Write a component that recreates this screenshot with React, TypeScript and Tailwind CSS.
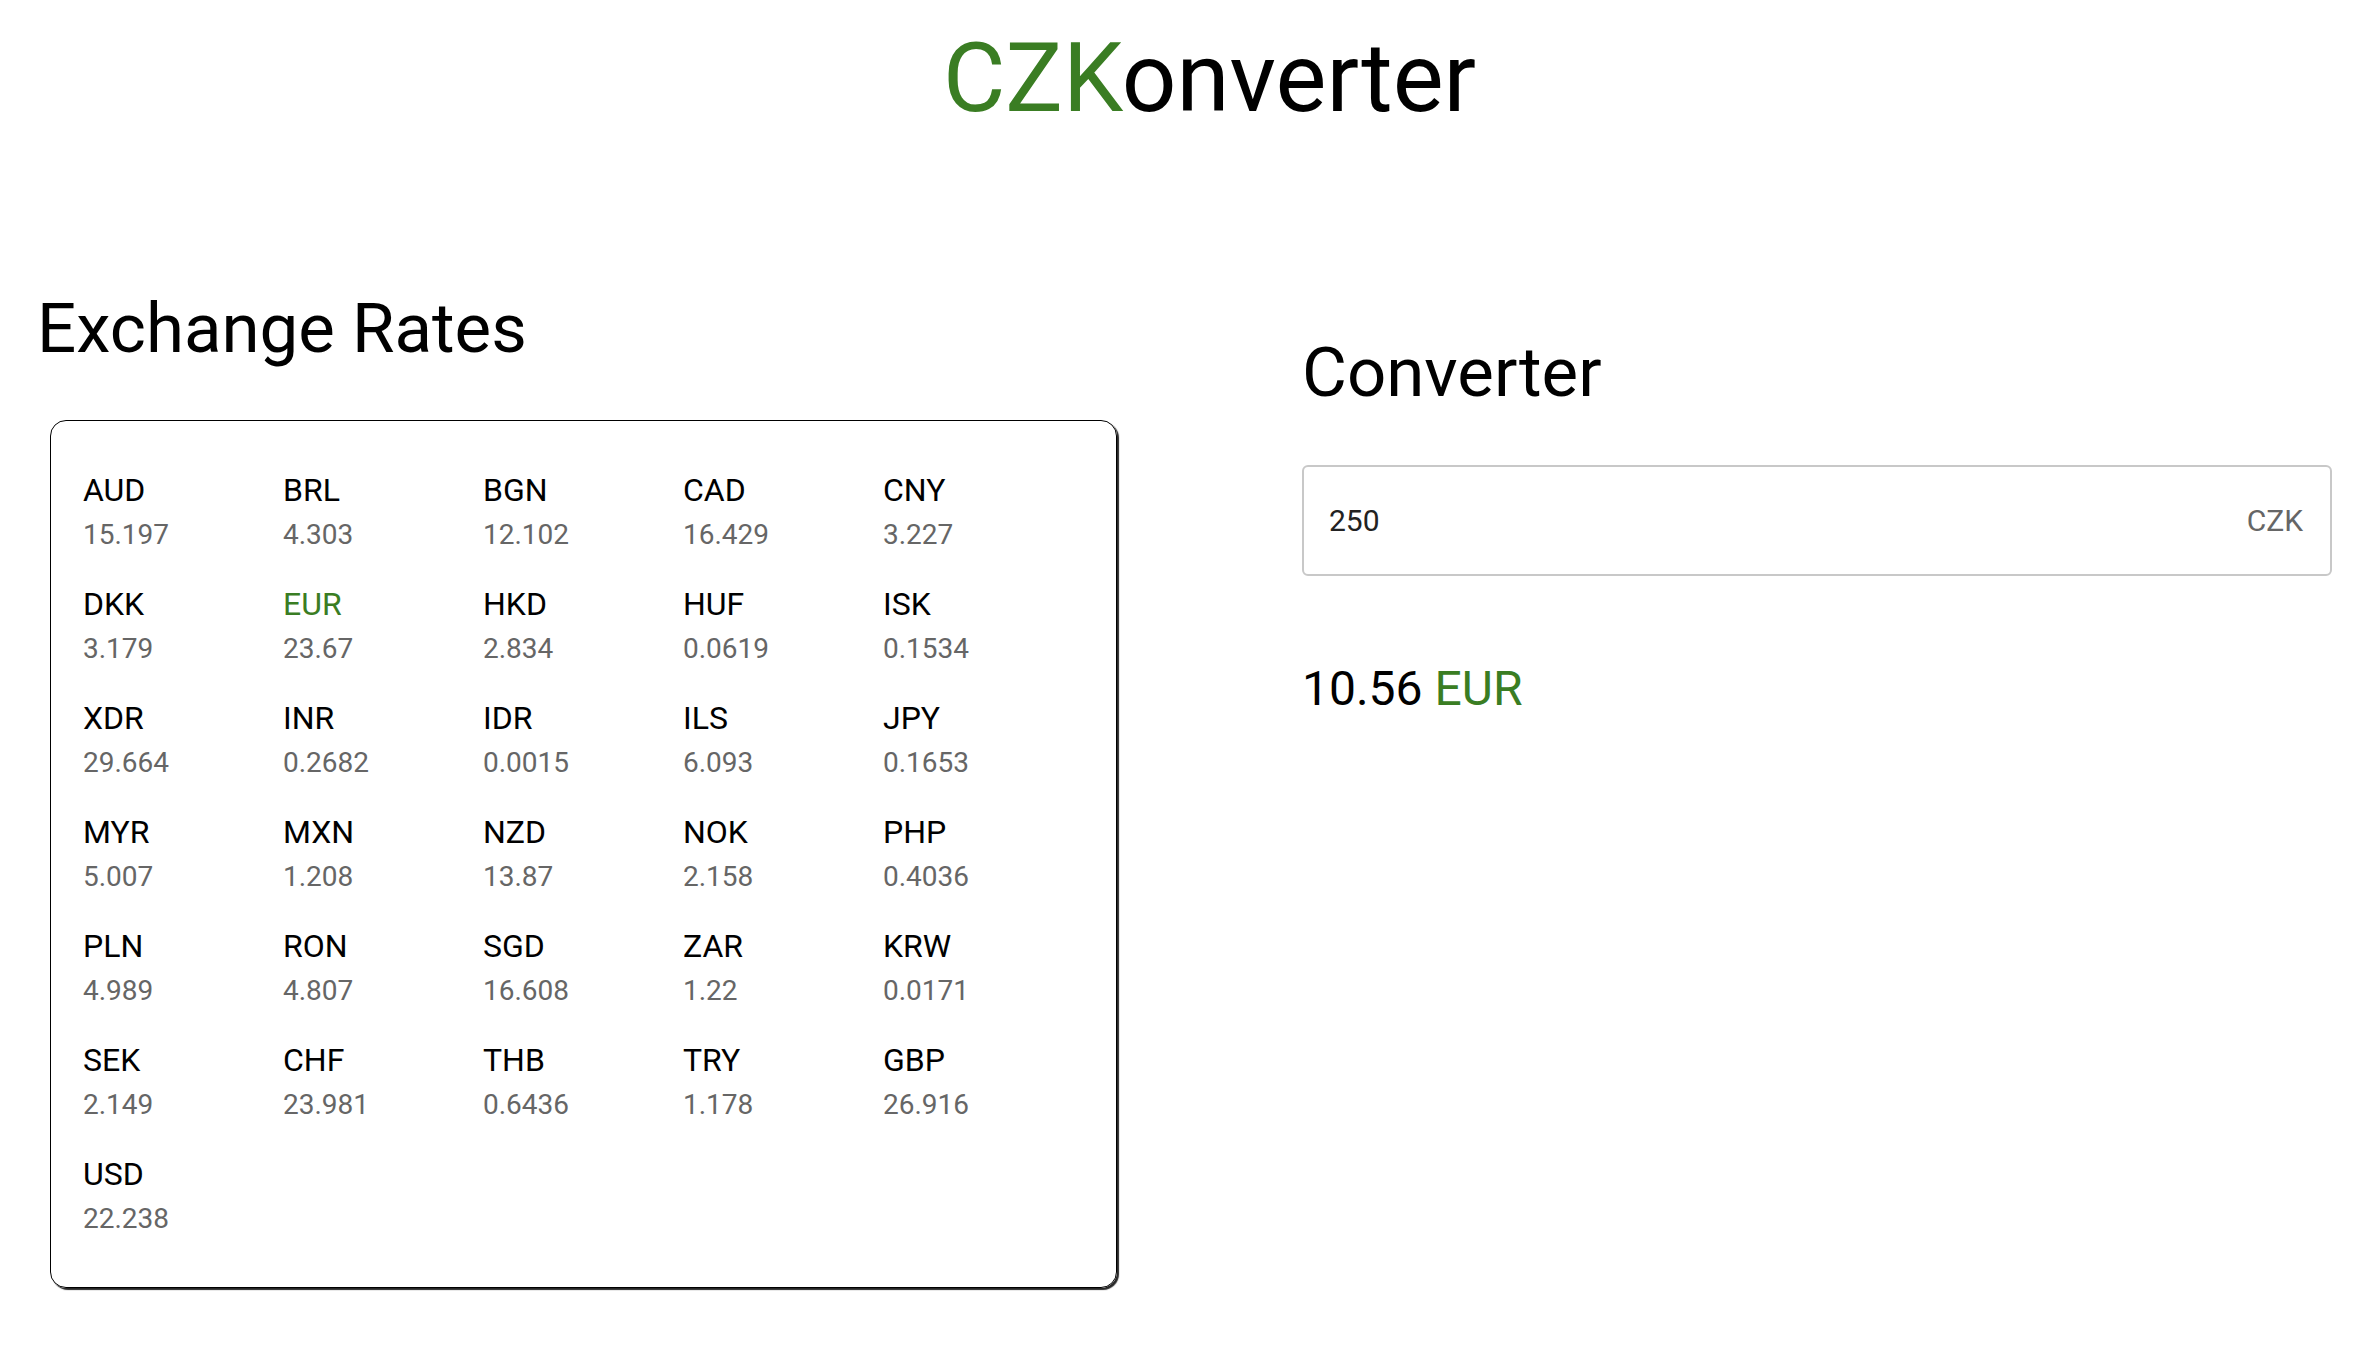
import React from "react";

const rates: [string, string][] = [
  ["AUD", "15.197"], ["BRL", "4.303"], ["BGN", "12.102"], ["CAD", "16.429"], ["CNY", "3.227"],
  ["DKK", "3.179"], ["EUR", "23.67"], ["HKD", "2.834"], ["HUF", "0.0619"], ["ISK", "0.1534"],
  ["XDR", "29.664"], ["INR", "0.2682"], ["IDR", "0.0015"], ["ILS", "6.093"], ["JPY", "0.1653"],
  ["MYR", "5.007"], ["MXN", "1.208"], ["NZD", "13.87"], ["NOK", "2.158"], ["PHP", "0.4036"],
  ["PLN", "4.989"], ["RON", "4.807"], ["SGD", "16.608"], ["ZAR", "1.22"], ["KRW", "0.0171"],
  ["SEK", "2.149"], ["CHF", "23.981"], ["THB", "0.6436"], ["TRY", "1.178"], ["GBP", "26.916"],
  ["USD", "22.238"],
];

export default function App() {
  return (
    <div className="min-h-[1362px] w-full bg-white text-black [font-family:Roboto,'Liberation_Sans',sans-serif]">
      <div className="flex justify-center pt-[30px] pl-[45px]">
        <h1 className="text-[96px] leading-none font-normal">
          <span className="text-[#3a7d23]">CZK</span>onverter
        </h1>
      </div>
      <div className="flex">
        <div className="pl-[37px] pt-[168px] w-[1302px] shrink-0">
          <h2 className="text-[69px] leading-none font-normal">Exchange Rates</h2>
          <div className="mt-[57px] ml-[13px] w-[1067px] rounded-[16px] border border-black shadow-[2px_2px_1px_rgba(0,0,0,0.85)] pl-[32px] pt-[49px] pb-[48px]">
            <div className="grid grid-cols-[repeat(5,200px)] gap-y-[29px]">
              {rates.map(([code, val]) => (
                <div key={code} className="leading-[41px]">
                  <div className={"text-[32px] " + (code === "EUR" ? "text-[#3a7d23]" : "text-black")}>{code}</div>
                  <div className="mt-[3px] text-[28px] text-[#666666]">{val}</div>
                </div>
              ))}
            </div>
          </div>
        </div>
        <div className="pt-[212px] w-[1030px] shrink-0">
          <h2 className="text-[69px] leading-none font-normal">Converter</h2>
          <div className="mt-[58px] h-[111px] w-[1030px] rounded-[6px] border-2 border-[#c8c8c8] flex items-center justify-between pl-[25px] pr-[27px] text-[30px]">
            <span className="text-[#222222]">250</span>
            <span className="text-[#666666]">CZK</span>
          </div>
          <div className="mt-[89px] text-[48px] leading-none">
            10.56 <span className="text-[#3a7d23]">EUR</span>
          </div>
        </div>
      </div>
    </div>
  );
}
